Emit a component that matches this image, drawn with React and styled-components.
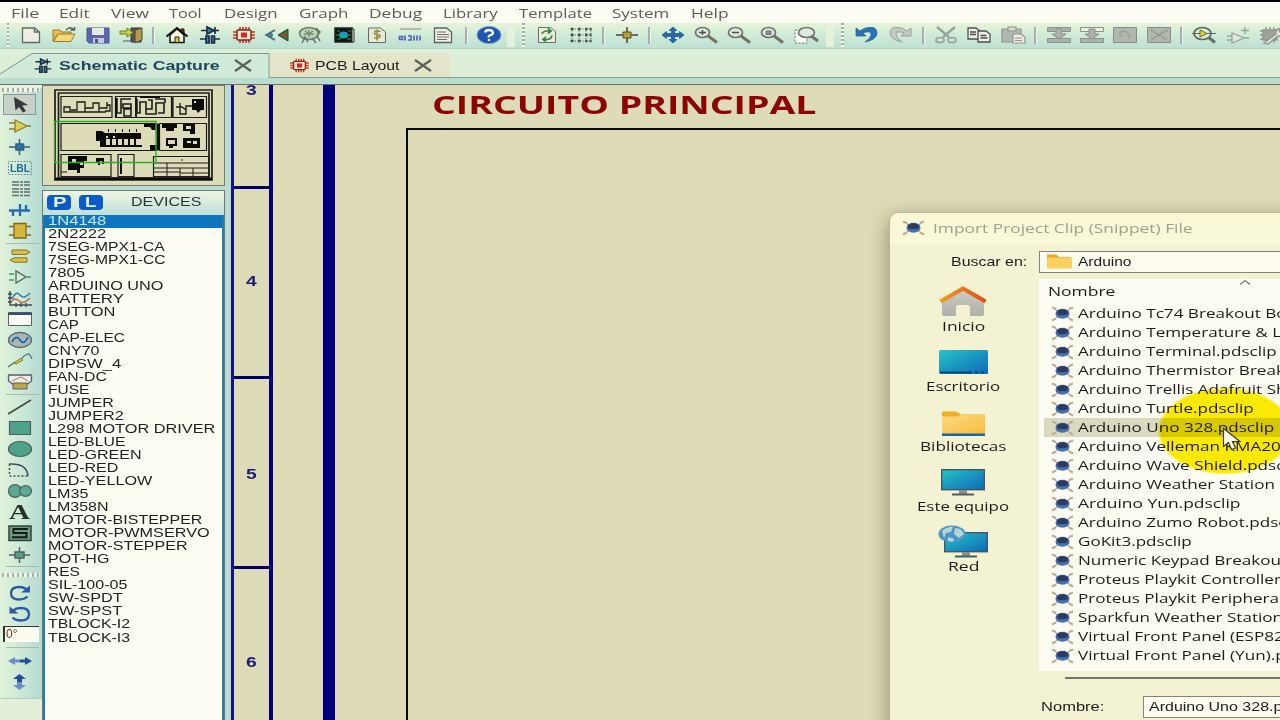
import React, { useLayoutEffect, useRef, useState } from "react";
import styled, { createGlobalStyle } from "styled-components";

const sans = '"Liberation Sans", Arial, sans-serif';
const ui = '"Open Sans", "Noto Sans", sans-serif';

const Global = createGlobalStyle`
  * { box-sizing: border-box; }
  html, body { margin: 0; padding: 0; overflow: hidden; }
`;

/* ---------- stretched text ---------- */
const WideBox = styled.span`
  display: inline-block;
  flex: none;
  white-space: pre;
  text-align: left;
`;
const WideInner = styled.span`
  display: inline-block;
  transform-origin: 0 50%;
`;
function Wide({ w, k = 1.3, children }) {
  const ref = useRef(null);
  const [scale, setScale] = useState(k);
  useLayoutEffect(() => {
    if (w) setScale(w / ref.current.offsetWidth);
  }, [w]);
  return (
    <WideBox style={w ? { width: w } : undefined}>
      <WideInner ref={ref} style={{ transform: `scaleX(${scale})` }}>
        {children}
      </WideInner>
    </WideBox>
  );
}

/* ---------- frame ---------- */
const Screen = styled.div`
  width: 1280px;
  height: 720px;
  overflow: hidden;
  display: flex;
  flex-direction: column;
  background: #cfe9d6;
  font-family: ${ui};
  color: #1c1c1c;
  position: relative;
`;
const MenuBar = styled.nav`
  height: 23px;
  flex: none;
  border-top: 2px solid #000;
  background: #fdfcf3;
  display: flex;
  align-items: center;
  padding: 0 0 0 11px;
  font-size: 12.8px;
  line-height: 20px;
  color: #5c5c58;
`;
const MenuItem = styled.span`
  flex: none;
  width: ${(p) => p.$slot}px;
`;
const Toolbar = styled.div`
  height: 26px;
  flex: none;
  display: flex;
  align-items: center;
  padding-bottom: 1px;
  background: linear-gradient(#e6f4da, #d3edd6 40%, #bde0d4);
  border-bottom: 1px solid #b7d3c6;
  overflow: hidden;
`;
const Tool = styled.span`
  width: 33.33px;
  height: 24px;
  flex: none;
  display: flex;
  align-items: center;
  justify-content: center;
`;
const ToolSep = styled.span`
  width: 12.6px;
  height: 17px;
  flex: none;
  display: flex;
  justify-content: center;
  &::before {
    content: "";
    width: 2px;
    background: #a9adb2;
    border-right: 1px solid #f4f4ee;
  }
`;
const ToolGrip = styled.span`
  width: ${(p) => p.$w}px;
  height: 100%;
  flex: none;
  display: flex;
  justify-content: flex-end;
  align-items: center;
  padding-right: ${(p) => p.$pad || 6}px;
  &::before {
    content: "";
    width: ${(p) => (p.$first ? 0 : 8)}px;
    height: 100%;
    margin-right: 7px;
    background: #e4f2dc;
  }
  &::after {
    content: "";
    width: 3px;
    height: 24px;
    background: repeating-linear-gradient(#9fb0a8 0 2px, #f2f8ea 2px 4px);
  }
`;
const TabStrip = styled.div`
  height: 29px;
  flex: none;
  display: flex;
  padding-top: 4px;
  background: #deefd9;
  border-bottom: 1px solid #8a9a90;
`;
const Tab = styled.div`
  height: ${(p) => (p.$active ? 25 : 24)}px;
  width: ${(p) => p.$w}px;
  flex: none;
  display: flex;
  align-items: center;
  gap: ${(p) => p.$gap}px;
  padding-left: ${(p) => p.$pad}px;
  padding-bottom: ${(p) => (p.$active ? 1 : 0)}px;
  font: ${(p) => (p.$active ? "bold 13px" : "13px")} ${sans};
  color: ${(p) => (p.$active ? "#1f4560" : "#1c1e20")};
  background: ${(p) => (p.$active ? "none" : "#e4e4c8")};
  position: relative;
  isolation: isolate;
`;
const TabEdge = styled.svg`
  position: absolute;
  left: 0;
  top: 0;
  z-index: -1;
`;
const SubStrip = styled.div`
  height: 7px;
  flex: none;
  background: #bbddce;
  border-bottom: 1px solid #6d6d70;
`;
const Body = styled.div`
  flex: 1;
  min-height: 0;
  display: flex;
`;

/* ---------- left tool column ---------- */
const Rail = styled.div`
  width: 42px;
  flex: none;
  padding-top: 1px;
  background: #e2f0d9;
`;
const RailBody = styled.div`
  height: 611px;
  background: linear-gradient(90deg, #e1f2da, #cce9d6 50%, #b4dad2);
  border-bottom: 1px solid #b5cfc4;
`;
const RailGrip = styled.div`
  height: 4px;
  margin: ${(p) => p.$m || "2px"};
  background: repeating-linear-gradient(90deg, #a4b3aa 0 2px, #f1f7e8 2px 5px);
`;
const RailTool = styled.div`
  width: ${(p) => (p.$on ? 33 : 39)}px;
  height: 21.15px;
  margin-left: ${(p) => (p.$on ? 3 : 0)}px;
  display: flex;
  align-items: center;
  justify-content: center;
  border: ${(p) => (p.$on ? "1px solid #8299a0" : "none")};
  background: ${(p) => (p.$on ? "#c6d2c6" : "none")};
`;
const RailLine = styled.div`
  height: 1px;
  margin: ${(p) => p.$m || "1px 3px 1px 6px"};
  background: #a9b9ac;
`;
const Angle = styled.div`
  width: 36px;
  height: 16px;
  margin: 2px 0 0 3px;
  border: 1px solid #333;
  border-width: 1px 0 0 2px;
  background: #fbfbf0;
  font: 12px/14px ${sans};
  color: #5b3a1c;
  padding-left: 1px;
`;

/* ---------- device column ---------- */
const Side = styled.div`
  width: 189px;
  flex: none;
  display: flex;
  flex-direction: column;
  gap: 4px;
  background: linear-gradient(90deg, #a8cfd0, #bbddd0 6px, #bbddd0);
`;
const Preview = styled.div`
  width: 183px;
  height: 101px;
  flex: none;
  border: 1px solid #777c70;
  background: #dedbb9;
`;
const Devices = styled.div`
  width: 183px;
  flex: 1;
  border: 1px solid #70787c;
  border-bottom: 0;
  background: #fdfcf3;
  display: flex;
  flex-direction: column;
`;
const DevicesHead = styled.div`
  height: 24px;
  flex: none;
  display: flex;
  align-items: center;
  padding: 0 0 2px 4px;
  background: linear-gradient(#eef6e2, #c0e0d8);
  font: 13.5px/20px ${sans};
  color: #2b3239;
`;
const Pill = styled.span`
  width: 24px;
  height: 15px;
  margin-right: 8px;
  border-radius: 4px;
  background: #0a5bc8;
  color: #e6f2ea;
  font: bold 14px/15px ${sans};
  display: flex;
  justify-content: center;
`;
const DeviceList = styled.div`
  flex: 1;
  border: solid #1f7fb0;
  border-width: 0 2px 0 2px;
  font: 12.6px/13px ${sans};
  color: #202226;
`;
const Device = styled.div`
  height: 13.02px;
  margin-left: -1px;
  padding-left: 4px;
  background: ${(p) => (p.$on ? "#0d74be" : "none")};
  color: ${(p) => (p.$on ? "#cfe6dc" : "inherit")};
`;

/* ---------- schematic sheet ---------- */
const Sheet = styled.div`
  flex: 1;
  min-width: 0;
  display: flex;
  background: #dedbb9;
`;
const Ruler = styled.div`
  width: 42px;
  flex: none;
  border-left: 3px solid #14147c;
  border-right: 4px solid #00007c;
  display: flex;
  flex-direction: column;
`;
const RulerCell = styled.div`
  height: ${(p) => p.$h}px;
  flex: none;
  border-bottom: 3px solid #00006c;
  display: flex;
  align-items: center;
  justify-content: center;
  padding-top: ${(p) => p.$pt || 0}px;
  padding-bottom: ${(p) => p.$pb || 0}px;
  font: bold 14px/16px ${sans};
  color: #1c1c78;
`;
const Border = styled.div`
  width: 12px;
  margin-left: 50px;
  flex: none;
  background: #00007c;
`;
const Canvas = styled.div`
  flex: 1;
  display: flex;
  flex-direction: column;
`;
const SheetTitle = styled.h1`
  margin: 0;
  height: 43px;
  padding: 3px 0 0 97px;
  font: bold 24.5px/34px ${ui};
  color: #8c0600;
`;
const Frame = styled.div`
  flex: 1;
  margin-left: 71px;
  border: solid #060a04;
  border-width: 2.5px 0 0 2.5px;
`;

/* ---------- dialog ---------- */
const Dialog = styled.section`
  position: absolute;
  left: 889px;
  top: 212px;
  width: 520px;
  height: 540px;
  border: 1px solid #b9b99c;
  border-radius: 9px 0 0 0;
  background: #f3f2d3;
  box-shadow: 0 6px 20px rgba(60, 58, 30, 0.5);
  display: flex;
  flex-direction: column;
`;
const DialogTitle = styled.header`
  height: 31px;
  flex: none;
  display: flex;
  align-items: center;
  gap: 8px;
  padding: 0 0 2px 12px;
  background: #f8f7d8;
  border-radius: 9px 0 0 0;
  font-size: 13px;
  color: #a0a08c;
`;
const Row = styled.div`
  display: flex;
  align-items: center;
  flex: none;
`;
const LookRow = styled(Row)`
  height: 35px;
  font: 12.6px/20px ${sans};
  color: #1b1b1b;
  padding-left: 61px;
`;
const Field = styled.div`
  flex: 1;
  height: 22px;
  margin-left: ${(p) => p.$ml}px;
  padding-left: ${(p) => p.$pl}px;
  border: 1px solid #84847c;
  background: #fdfcef;
  display: flex;
  align-items: center;
  gap: 6px;
`;
const Split = styled.div`
  display: flex;
  height: 392px;
  flex: none;
`;
const Places = styled.div`
  width: 149px;
  flex: none;
`;
const Place = styled.div`
  height: 60.1px;
  display: flex;
  flex-direction: column;
  align-items: center;
  justify-content: flex-end;
  font-size: 13px;
  line-height: 18px;
  padding: 0 3px 4px 0;
  & svg { margin-bottom: ${(p) => p.$gap}px; }
`;
const Files = styled.div`
  flex: 1;
  background: #fdfcf3;
  font-size: 13px;
  line-height: 19px;
`;
const FilesHead = styled.div`
  height: 25px;
  padding: 0 0 1px 9px;
  display: flex;
  align-items: center;
  position: relative;
`;
const Caret = styled.svg`
  position: absolute;
  left: 200px;
  top: 0;
`;
const File = styled.div`
  height: 19.03px;
  margin-left: 5px;
  padding-left: 7px;
  display: flex;
  align-items: center;
  gap: 4px;
  background: ${(p) => (p.$on ? "#dad9bf" : "none")};
`;
const Divider = styled.div`
  height: 2px;
  margin: 6px 0 0 175px;
  background: #757570;
  flex: none;
`;
const NameRow = styled(LookRow)`
  height: 24px;
  margin-top: 16px;
  padding-left: 151px;
`;
const Halo = styled.div`
  position: absolute;
  left: 1157px;
  top: 387px;
  width: 136px;
  height: 88px;
  border-radius: 50%;
  background: radial-gradient(closest-side, #fcec00 94%, rgba(252, 236, 0, 0));
  mix-blend-mode: multiply;
`;
const Pointer = styled.svg`
  position: absolute;
  left: 1222px;
  top: 427px;
`;

/* ---------- icons ---------- */
const paper = "#efeee0";
const gy = "#98a09c";
const S = { fill: "none", strokeWidth: 1.5 };
const shapes = {
  file: <path d="M3.5 2h12l5 4v10.500h-17zM15.500 2v4h5" fill={paper} stroke="#63686b" strokeWidth="1.300" />,
  open: (
    <g>
      <path d="M1 4h7l2 2h9v3H5L1 15z" fill="#e8bd54" stroke="#9d7a2a" />
      <path d="M1.500 15.500L6 8h17l-4 7.500z" fill="#f5d77c" stroke="#9d7a2a" />
      <path d="M14 4q4-4 7-1m1.500-2v3h-4" {...S} stroke="#46566a" />
    </g>
  ),
  save: (
    <g>
      <path d="M1 2h22v15H3l-2-2z" fill="#5a67ad" stroke="#47539a" />
      <path d="M6 2h12v7H6z" fill="#e8eae6" />
      <path d="M7 12h11v5H7z" fill="#c6cbdc" />
      <path d="M9 13h3v4H9z" fill="#47539a" />
    </g>
  ),
  exit: (
    <g>
      <path d="M12 2h10v14H12z" fill="#55584a" stroke="#333" />
      <path d="M16 4l7-2v12l-7 3z" fill="#b59a4a" stroke="#444" />
      <path d="M1 5h7V2l6 4.500L8 11V8H1z" fill="#c6d24a" stroke="#6e7a2b" />
      <path d="M4 15h9" stroke="#555" />
    </g>
  ),
  home: (
    <g>
      <path d="M16 3h3v5h-3z" fill="#b22" stroke="#111" />
      <path d="M5 9v7.500h14V9l-7-6z" fill="#faf8e4" stroke="#111" strokeWidth="1.500" />
      <path d="M1.500 10.500L12 2l10.500 8.500" {...S} stroke="#111" strokeWidth="2" />
      <path d="M10 11h4v5.500h-4z" fill="#e5c23c" stroke="#222" />
    </g>
  ),
  schem: (
    <g stroke="#1f2c3a" strokeWidth="1.700">
      <path d="M3 4.500h18M17 1v7" fill="none" />
      <path d="M9 1v7l7-3.500z" fill="#2a84c4" />
      <path d="M2 13h6m8 0h6" />
      <path d="M8 10h3v7H8zM13.500 10h3v7h-3z" fill="#2a84c4" />
    </g>
  ),
  chip: (
    <g>
      <path d="M8 1v3m3-3v3m3-3v3m3-3v3M8 14v3m3-3v3m3-3v3m3-3v3M1 6h4M1 9h4M1 12h4M19 6h4M19 9h4M19 12h4" stroke="#d2301c" strokeWidth="1.600" />
      <rect x="5" y="4" width="14" height="10" rx="1" fill="#f3e8d8" stroke="#7c2a1c" strokeWidth="1.500" />
      <rect x="9" y="6.500" width="6" height="5" fill="#d22" />
    </g>
  ),
  view3d: (
    <g>
      <path d="M10 4L1 9l9 5" fill="none" stroke="#45607a" strokeWidth="1.500" />
      <path d="M6 6q4 3 0 6l-3-3z" fill="#4777ab" />
      <path d="M23 3L13 9l10 6z" fill="#2a7d43" stroke="#1d4e2d" />
      <path d="M21 6l-5 3 5 3z" fill="#c8321f" />
    </g>
  ),
  gerber: (
    <g>
      <ellipse cx="11" cy="7.500" rx="9.500" ry="6" fill="#bcd3b8" stroke="#6c806a" strokeWidth="1.500" />
      <path d="M6 8h10M11 4v7M7 5l3 2M15 5l-3 2" stroke="#55705a" />
      <path d="M4 17l3-6 3 5M18 2l4 4-3 4 3 5M14 12l4 5" {...S} stroke="#6c746a" />
    </g>
  ),
  code: (
    <g>
      <path d="M3 2h17v14H3z" fill="#111" stroke="#222" strokeWidth="1.500" />
      <path d="M20 3h2v13h-2z" fill="#e4e6d8" stroke="#333" />
      <ellipse cx="11.500" cy="9" rx="4.500" ry="3.500" fill="#18a0b4" />
      <path d="M5 5h3m8 0h3M5 13h4m6 0h4M4 9h3m9 0h3" stroke="#27a24a" />
    </g>
  ),
  bom: (
    <g>
      <path d="M3.500 2h12l5 4v10.500h-17z" fill="#e9ead6" stroke="#666b62" />
      <path d="M15.500 5.500q-6-2-6 1t5 2.500q2.500 3-5.500 3M12 3.500v11" fill="none" stroke="#8c8c40" strokeWidth="1.500" />
    </g>
  ),
  bits: (
    <g>
      <path d="M2 3h21" stroke="#a9a9a9" strokeWidth="1.500" />
      <path d="M1.500 10.500v3h3v-3zM7 9.500v5M10 10h3v4h-3M16 9.500v5M19 9.500v5M22 9.500v5" {...S} stroke="#5564b8" strokeWidth="1.700" />
    </g>
  ),
  note: (
    <g>
      <path d="M3.500 2h12l5 4v10.500h-17z" fill={paper} stroke="#5c6165" strokeWidth="1.300" />
      <path d="M6 6h9M6 8.500h12M6 11h12M6 13.500h10" stroke="#6c7070" />
    </g>
  ),
  help: (
    <g>
      <ellipse cx="12" cy="9" rx="12" ry="8.600" fill="#1f56b4" stroke="#7c9cca" />
      <path d="M8 6.500Q8.500 4 12 4t4 2.700q0 1.600-2.500 2.500T12 11.500M12 13v2" fill="none" stroke="#f4f6ee" strokeWidth="2.300" />
    </g>
  ),
  refresh: (
    <g>
      <path d="M3.500 1.500h12l5 4v11h-17z" fill="#ebecdc" stroke="#6b706a" />
      <path d="M7 8q1-3 5-3h3m-2-2.500L16 5l-3 2.500M17 9.500q-1 4-5 4H9m2-2.500l-3 2.500 3 2" fill="none" stroke="#2e8a3a" strokeWidth="1.700" />
    </g>
  ),
  grid: (
    <g fill="none" stroke="#4a5248">
      <path d="M1 3h22M1 9h22M1 15h22M3 2v14M10 2v14M17 2v14M22 2v14" strokeWidth="1.100" strokeDasharray="1 1.500" />
      <path d="M2 3h2.500m4.500 0h2.500m4.500 0h2.500m2 0h2M2 9h2.500m4.500 0h2.500m4.500 0h2.500m2 0h2M2 15h2.500m4.500 0h2.500m4.500 0h2.500m2 0h2" strokeWidth="2.300" />
    </g>
  ),
  origin: (
    <g>
      <path d="M1 9h22M12 1v16" stroke="#444" strokeWidth="1.500" />
      <path d="M8 6h8v6H8z" fill="#b9a03a" stroke="#5a4c18" />
    </g>
  ),
  pan: <path d="M12 1l4 3.500h-2.500v3h5V5.500L23 9l-4.500 3.500v-2h-5v3H16L12 17l-4-3.500h2.500v-3h-5v2L1 9l4.500-3.500v2h5v-3H8z" fill="#2468b0" stroke="#1d4e86" strokeWidth=".7" />,
  zin: (
    <g stroke="#6d7470">
      <path d="M14 10l9 6.500" stroke="#77705e" strokeWidth="3" />
      <ellipse cx="8.500" cy="6.500" rx="7" ry="5" fill="#dfe9dc" strokeWidth="1.700" />
      <path d="M5 6.500h7M8.500 4v5" stroke="#4c524c" strokeWidth="1.500" />
    </g>
  ),
  zout: (
    <g stroke="#6d7470">
      <path d="M14 10l9 6.500" stroke="#77705e" strokeWidth="3" />
      <ellipse cx="8.500" cy="6.500" rx="7" ry="5" fill="#dfe9dc" strokeWidth="1.700" />
      <path d="M5 6.500h7" stroke="#4c524c" strokeWidth="1.500" />
    </g>
  ),
  zall: (
    <g stroke="#6d7470">
      <path d="M14 10l9 6.500" stroke="#77705e" strokeWidth="3" />
      <ellipse cx="8.500" cy="6.500" rx="7" ry="5" fill="#dfe9dc" strokeWidth="1.700" />
      <path d="M6 5h5v3.500H6z" fill="#8a918c" />
    </g>
  ),
  zarea: (
    <g stroke="#6d7470">
      <path d="M1 4h12v13H1z" fill="#fbfbf4" strokeDasharray="2 1.500" />
      <path d="M17 10l7 5" stroke="#77705e" strokeWidth="3" />
      <ellipse cx="12.500" cy="6.500" rx="8" ry="5" fill="#dfe9dc" strokeWidth="1.700" />
    </g>
  ),
  undo: <path d="M1 2v8h10L8 7q8-3 8 1.500 0 3.500-6 7.500 12-2.500 12-9T14 1.500Q9 1.500 5 5z" fill="#2a72b4" stroke="#1f5c96" strokeWidth=".7" />,
  redo: <path d="M23 2v8H13l3-3q-8-3-8 1.500 0 3.500 6 7.500Q2 13.500 2 7t8-5.500q5 0 9 3.500z" fill="#c3cac2" stroke={gy} />,
  cut: (
    <g stroke={gy} strokeWidth="1.700" fill="none">
      <path d="M3 1l12 10M21 1L9 11" strokeWidth="2.300" />
      <ellipse cx="6" cy="14" rx="4" ry="2.500" />
      <ellipse cx="18" cy="14" rx="4" ry="2.500" />
    </g>
  ),
  copy: (
    <g fill={paper} stroke="#4b5055" strokeWidth="1.300">
      <path d="M1 2h8l4 3v8H1z" />
      <path d="M11 5h8l4 3v8H11z" />
      <path d="M3 6h6M3 8.500h6M13.500 9.500h6M13.500 12h7" />
    </g>
  ),
  paste: (
    <g stroke="#8f9490" strokeWidth="1.200">
      <path d="M1 3h19v13H1z" fill="#b2b8b0" />
      <path d="M7 1h8v4H7z" fill="#d9dccf" />
      <path d="M12 8h8l4 3v6H12z" fill={paper} />
      <path d="M14 12h7M14 14.500h7" />
    </g>
  ),
  blkCopy: (
    <g fill="#adb2ac" stroke="#8b918c">
      <path d="M.5 1.500h23v4H.5zM.5 12.500h23v4H.5z" />
      <path d="M9 3h6v5h4l-7 5-7-5h4z" />
    </g>
  ),
  blkMove: (
    <g fill="#adb2ac" stroke="#8b918c">
      <path d="M.5 1.500h23v4H.5z" fill={paper} />
      <path d="M.5 12.500h23v4H.5z" />
      <path d="M9 3h6v5h4l-7 5-7-5h4z" />
    </g>
  ),
  blkRot: (
    <g stroke="#878d88">
      <path d="M.5 1.500h23v15H.5z" fill="#b2b7ae" />
      <path d="M6 8q4-5 10 0v4M9 5L6 8l4 2" fill="none" strokeDasharray="2 1" />
    </g>
  ),
  blkDel: (
    <g stroke="#878d88">
      <path d="M.5 1.500h23v15H.5z" fill="#b2b7ae" />
      <path d="M4 4l16 10M20 4L4 14" strokeDasharray="2 1" strokeWidth="1.500" />
    </g>
  ),
  pick: (
    <g>
      <path d="M16 11l7 5.500" stroke="#66706e" strokeWidth="3" />
      <ellipse cx="10.500" cy="7.500" rx="8.500" ry="6" fill="#dbe9d6" stroke="#5c6866" strokeWidth="1.700" />
      <path d="M0 7.500h24" stroke="#5c6866" />
      <path d="M8 4v7l7-3.500z" fill="#d9d43c" stroke="#6b7038" />
    </g>
  ),
  make: (
    <g stroke="#9aa29d" fill="none" strokeWidth="1.300">
      <path d="M6 7v10l12-5zM1 10h5M1 14h5M18 12h5M15 4.500h8M19 1v7" fill="#dfe8da" />
    </g>
  ),
  pack: (
    <g stroke="#8e9490" strokeWidth="1.300">
      <path d="M1 5h3m-3 4h3m-3 4h3M7 1v3m4-3v3m4-3v3M7 14v3m4-3v3m4-3v3" />
      <path d="M4 4h14v10H4z" fill="#9ca29c" />
      <path d="M5 17L17 8q-1-5 5-6l-2 3 2 2 3-1q-2 5-6 4L9 18z" fill="#e4e6d8" />
    </g>
  ),

  arrow: <path d="M6 1l14 8-6 .5L18 15l-3 1.500L11 11l-3.500 3.500z" fill="#33383a" />,
  comp: (
    <g stroke="#8d7c38" strokeWidth="1.300">
      <path d="M1 6h6M1 12h6M18 9h5" />
      <path d="M7 3v12l12-6z" fill="#e3cf4e" />
    </g>
  ),
  junction: (
    <g stroke="#35607a" strokeWidth="1.600">
      <path d="M1 9h21M11.500 1v16" />
      <path d="M8 6h7.500v6H8z" fill="#2078b8" />
    </g>
  ),
  lbl: <rect x="0.500" y="2.500" width="23" height="13" fill="none" stroke="#6d8084" strokeDasharray="1.500 1.500" />,
  script: <path d="M4 2h18M4 5h18M4 9h18M4 12h18M4 15.500h18" stroke="#666e72" strokeWidth="1.400" strokeDasharray="7 1 3 1" />,
  bus: <path d="M1 9.500h21M5 9v6M12 3v12M18 4v5" stroke="#1f6fae" strokeWidth="2.300" />,
  sub: (
    <g stroke="#7b6b23" strokeWidth="1.300">
      <path d="M1 4.500h22M1 13h22" />
      <path d="M6 1.500h12v14.500H6z" fill="#d8b53c" />
    </g>
  ),
  term: (
    <g fill="#dcc146" stroke="#80722c">
      <path d="M4 3h14l4 2.200-4 2.200H4z" />
      <path d="M19 10.800H6L2 13l4 2.200h13z" />
    </g>
  ),
  pin: (
    <g stroke="#56635f" strokeWidth="1.300" fill="none">
      <path d="M8 3v12l10-6z" />
      <path d="M1 6h5M1 12h5M19 9h4" stroke="#3b9a6c" />
    </g>
  ),
  graph: (
    <g fill="none" strokeWidth="1.400">
      <path d="M2 2v14h22M0 5h4M0 9h4M0 13h4M8 14v4M13 14v4M18 14v4" stroke="#444a52" />
      <path d="M4 10q4-9 8-4t10-2" stroke="#2680b8" />
      <path d="M4 12q3-4 7 0t11-3" stroke="#c66a50" />
    </g>
  ),
  tape: (
    <g>
      <path d="M0.500 2.500h23v13H.5z" fill="#fafaf4" stroke="#59636a" />
      <path d="M.5 2.500h23v2.500H.5z" fill="#3c4c78" />
    </g>
  ),
  gen: (
    <g>
      <ellipse cx="12" cy="9" rx="11.500" ry="7.500" fill="#a9b6b6" stroke="#5c6a70" strokeWidth="1.300" />
      <path d="M4 11q4-8 8-2t8-3" fill="none" stroke="#1d62a8" strokeWidth="1.700" />
    </g>
  ),
  probe: (
    <g fill="none">
      <path d="M0 15l7-5" stroke="#60686a" strokeWidth="1.300" />
      <path d="M6 11l7-5 2 2-7 4z" fill="#dccb40" stroke="#7e7224" />
      <path d="M14 6q6-6 8-3l2 4" stroke="#5a7684" strokeWidth="1.300" />
    </g>
  ),
  meter: (
    <g stroke="#576068">
      <path d="M0.500 2h23v6l-4 3h-15l-4-3z" fill="#e8eee8" strokeWidth="1.300" />
      <path d="M4 8l9-4 7 4" fill="none" stroke="#be7150" />
      <path d="M5 10h14v6H5z" fill="#b9a94c" />
    </g>
  ),
  line: <path d="M0 16L23 2" stroke="#45494c" strokeWidth="1.600" />,
  box: <path d="M1.500 2.500h21v13h-21z" fill="#4fa28a" stroke="#49605f" strokeWidth="1.200" />,
  circle: <ellipse cx="12" cy="9" rx="11.500" ry="7.500" fill="#4fa28a" stroke="#49605f" strokeWidth="1.200" />,
  arc: (
    <g fill="none" stroke="#3f4f58" strokeWidth="1.500">
      <path d="M1.500 3v12h18" strokeDasharray="2 2" />
      <path d="M1 3q18-1 19 12" />
    </g>
  ),
  path2: (
    <g fill="#5aaa92" stroke="#49605f" strokeWidth="1.200">
      <ellipse cx="7" cy="9" rx="6.500" ry="6.300" />
      <ellipse cx="17.500" cy="9" rx="6" ry="5.300" />
    </g>
  ),
  sym: (
    <g>
      <path d="M1 2h22v14.500H1z" fill="#6b9a7f" stroke="#31413a" strokeWidth="1.500" />
      <path d="M20 5H5.500v4h13v4.300H4" fill="none" stroke="#151a18" strokeWidth="2" />
    </g>
  ),
  marker: (
    <g stroke="#506260" strokeWidth="1.500">
      <path d="M1 9h21M11.500 1v16" />
      <path d="M7 6h9v6H7z" fill="#4fa08a" />
    </g>
  ),
  rotr: (
    <g>
      <path d="M18.500 5.500Q16 3 11.500 3 3 3 3 9.300T11.500 15.500q4.500 0 8-3" fill="none" stroke="#2c5aa4" strokeWidth="2.300" />
      <path d="M22 1.500v7H13z" fill="#2c5aa4" />
    </g>
  ),
  rotl: (
    <g>
      <path d="M5 5.500Q8 3 12.500 3 21 3 21 9.300t-8.500 6.200q-5 0-8-3" fill="none" stroke="#2c5aa4" strokeWidth="2.300" />
      <path d="M1.500 1.500v7h9z" fill="#2c5aa4" />
    </g>
  ),
  flipx: (
    <g>
      <path d="M0 9l7-4v2.500h5v3H7V13z" fill="#6c8ccc" />
      <path d="M24 9l-7-4v2.500h-5v3h5V13z" fill="#214f96" />
    </g>
  ),
  flipy: (
    <g>
      <path d="M11.500 1l-6.500 5h4v3.500h5V6h4z" fill="#214f96" />
      <path d="M11.500 17L5 12h4V9h5v3h4z" fill="#6c8ccc" />
    </g>
  ),
};
const Icon = ({ n, w = 24, h = 18 }) => (
  <svg width={w} height={h} viewBox="0 0 24 18" overflow="visible">
    {shapes[n]}
    {n === "lbl" && (
      <text x="2" y="13" fontFamily="Liberation Sans, sans-serif" fontSize="11" fontWeight="bold" textLength="20" lengthAdjust="spacingAndGlyphs" fill="#1b6ca2">LBL</text>
    )}
    {n === "serif" && (
      <text x="1" y="16" fontFamily="Liberation Serif, serif" fontSize="20" fontWeight="bold" textLength="21" lengthAdjust="spacingAndGlyphs" fill="#26302e">A</text>
    )}
  </svg>
);

const ClipIcon = () => (
  <svg width="23" height="16" viewBox="0 0 23 16">
    <path d="M1 1.500l4 1.500M22 1.500l-4 1.500M1 14.500l4-2M22 14.500l-4-2" stroke="#c2ab88" strokeWidth="2" />
    <path d="M4 3l4 3M19 3l-4 3M5 12l4-3M18 12l-4-3" stroke="#a3adb8" strokeWidth="1.500" />
    <ellipse cx="11.500" cy="7.700" rx="7" ry="5" fill="#4a6ba0" />
    <ellipse cx="11.500" cy="6.500" rx="5.500" ry="3.200" fill="#2b3c60" />
    <ellipse cx="12" cy="10.500" rx="3.500" ry="1.300" fill="#3b78bd" />
  </svg>
);
const CloseX = () => (
  <svg width="18" height="13" viewBox="0 0 18 13">
    <path d="M1 1l16 11M17 1L1 12" stroke="#5d605c" strokeWidth="2.200" />
  </svg>
);
const SmallFolder = () => (
  <svg width="25" height="15" viewBox="0 0 25 15">
    <path d="M0 1.500Q0 .5 1 .5h8l3 2.500h12v6H0z" fill="#f0a61c" />
    <rect y="3.500" width="25" height="11" rx="1.500" fill="#fbcf63" />
  </svg>
);

const Gradients = () => (
  <svg width="0" height="0" style={{ display: "block" }}>
    <defs>
      <linearGradient id="scr" x1="0" y1="0" x2="1" y2="1">
        <stop offset="0" stopColor="#27c4c6" />
        <stop offset="1" stopColor="#0c69b8" />
      </linearGradient>
      <linearGradient id="fold" x1="0" y1="0" x2="1" y2="1">
        <stop offset="0" stopColor="#fddc86" />
        <stop offset="1" stopColor="#f6bc38" />
      </linearGradient>
      <linearGradient id="roof" x1="0" y1="0" x2="1" y2="0">
        <stop offset="0" stopColor="#f49a1e" />
        <stop offset="1" stopColor="#e04c16" />
      </linearGradient>
      <linearGradient id="wall" x1="0" y1="0" x2="0" y2="1">
        <stop offset="0" stopColor="#cfcfc6" />
        <stop offset="1" stopColor="#b0b0aa" />
      </linearGradient>
    </defs>
  </svg>
);
const placeIcons = {
  home: (
    <svg width="48" height="32" viewBox="0 0 48 32">
      <path d="M3 14L24 2l21 12v15q0 2-3 2H31V22q0-2-3-2h-8q-3 0-3 2v9H6q-3 0-3-2z" fill="url(#wall)" />
      <path d="M1.500 16.500L24 3.500l22.500 13" fill="none" stroke="url(#roof)" strokeWidth="4" strokeLinejoin="round" />
    </svg>
  ),
  desk: (
    <svg width="49" height="24" viewBox="0 0 49 24">
      <rect width="49" height="24" rx="1.500" fill="url(#scr)" />
      <path d="M1 22.500h32m3 0h3m3 0h3" stroke="#0b4474" strokeWidth="2" />
    </svg>
  ),
  lib: (
    <svg width="43" height="26" viewBox="0 0 43 26">
      <path d="M0 1.500Q0 .5 1 .5h13l5 3h24v8H0z" fill="#f3ad22" />
      <path d="M0 5.500h15l4-2h24V23H0z" fill="url(#fold)" />
      <path d="M0 22.500h43v2.500H0z" fill="#1667a8" />
    </svg>
  ),
  pc: (
    <svg width="44" height="27" viewBox="0 0 44 27">
      <rect x=".7" y=".7" width="42.600" height="20" fill="url(#scr)" stroke="#3f5866" strokeWidth="1.400" />
      <path d="M18 21h8v4h-8z" fill="#8a9090" />
      <path d="M11 25.500h22" stroke="#4f5a5e" strokeWidth="2" />
    </svg>
  ),
  net: (
    <svg width="50" height="34" viewBox="0 0 50 34">
      <rect x="6.700" y="8.700" width="42.600" height="19" fill="url(#scr)" stroke="#3f5866" strokeWidth="1.400" />
      <path d="M24 28h8v4h-8z" fill="#8a9090" />
      <path d="M17 32.500h22" stroke="#4f5a5e" strokeWidth="2" />
      <ellipse cx="14" cy="10" rx="13.500" ry="8.500" fill="#4c96c4" />
      <path d="M4 7q6-5 11-4l-2 5-5 1-2 5zM17 4q7 0 9 6l-5 4-5-4zM10 13l6 2-1 3-5-1z" fill="#b4d6d4" />
    </svg>
  ),
};

/* miniature of the whole sheet */
const Overview = () => (
  <svg width="181" height="99" viewBox="43 86 181 99">
    <g fill="none" stroke="#1b1d18">
      <path d="M55 90h157v90H55zM58.500 93h150.500v85H58.500z" strokeWidth="1.700" />
      <path d="M61 96.500h51v21H61zM115.500 96.500h56v21h-56zM173 96.500h33.500v21H173zM61 123.500h96v27H61zM159.500 123.500h47v27h-47zM61 154.500h50v22H61zM118 154.500h16v22h-16zM153.500 156.500h55.500v20h-55.500z" strokeWidth="1.200" />
      <path d="M64 107h6v5h-6zM71 110h6v-8h8v10h-8m8-4h8v-5h6v9h-6m6-4h8v-6m0 3h3v6h-5M70 112h36" strokeWidth="1.300" />
      <path d="M117 98v15h4V99h10m-8 5h8v4h-8zM124 109h7v7h-7zM137 99v14h3v-11h6v11m2-13h4v9h-6v5h10v-11h8v10h-6M155 99h10v4" strokeWidth="1.600" />
      <path d="M172 97v20M136 97v20" strokeWidth="2" />
      <path d="M176 107h6l4 3m-6-7v11h6v-8h8" strokeWidth="1.400" />
      <path d="M153.500 163h55.500M153.500 168h55.500M167 163v13M180 168v9M193 168v9M153.500 172h27m0 1h28M61 172h6M182 159v2" />
    </g>
    <g fill="#0b0c08">
      <path d="M192 99h12v11h-3l-3 3-2-3h-4z" />
      <path d="M96 131h6l3 2h36v6h-5v7h-2v-7h-4v7h-2v-7h-4v7h-2v-7h-4v7h-2v-7h-4v7h-2v-7h-4v6h-6v-4h-4z" />
      <path d="M100 145h42v2h-42zM108 129h1v3h-1zM115 129h1v3h-1zM122 129h1v3h-1zM129 129h1v3h-1zM136 129h1v3h-1z" />
      <path d="M144 124h12v6h-4l-2-3h-6zM150 145h7v5h-7zM157 124h2.500v26H157z" />
      <path d="M162 124h15v4h-3v3h-8v-3h-4zM183 124h12v10h-5v-3h-7zM166 138h11v8h-4v2h-4v-2h-3zM183 138h17v10H183z" />
      <path d="M68 156h19v5h-3v7h-4v5h-3v-3h-9zM96 158h8v6h-2v-3h-2v4h-2v-3h-2zM115 98h2v19h-2zM140 96h20v2h-20zM120 158h2v16h-2z" />
      <path d="M55 177.500h157v2.500H55z" />
    </g>
    <g fill="#dedbb9">
      <path d="M168 140h7v4h-7zM186 126h5v3h-5zM187 141h4v2h-4zM193 141h4v3h-4zM72 159h4v3h-4zM80 163h3v2h-3zM194 101h2v2h-2zM106 136h2v2h-2zM113 136h2v2h-2z" />
    </g>
    <path d="M54.500 121.500h101.500v41H54.500z" fill="none" stroke="#2fae24" strokeWidth="1.300" />
  </svg>
);

/* ---------- data ---------- */
const menu = [
  ["File", 28, 47.5], ["Edit", 31, 52], ["View", 38, 58.5], ["Tool", 33, 54.5], ["Design", 54, 75.5], ["Graph", 49, 69.500],
  ["Debug", 53, 74.500], ["Library", 55, 76], ["Template", 73, 93], ["System", 57, 78.500], ["Help", 38, 60],
];
const tools = [
  "file", "open", "save", "exit", "|", "home", "schem", "chip", "view3d", "gerber", "code", "bom", "bits", "note", "|", "help",
  "g24.6", "refresh", "grid", "|", "origin", "|", "pan", "zin", "zout", "zall", "zarea", "g27.6", "undo", "redo", "|", "cut", "copy", "paste",
  "|", "blkCopy", "blkMove", "blkRot", "blkDel", "|", "pick", "make", "pack",
];
const rail = [
  ["arrow", "comp", "junction", "lbl", "script", "bus", "sub"],
  ["term", "pin", "graph", "tape", "gen", "probe", "meter"],
  ["line", "box", "circle", "arc", "path2", "serif", "sym", "marker"],
];
const devices = [
  ["1N4148", 58], ["2N2222", 58], ["7SEG-MPX1-CA", 117], ["7SEG-MPX1-CC", 117], ["7805", 37], ["ARDUINO UNO", 116], ["BATTERY", 76],
  ["BUTTON", 68], ["CAP", 31], ["CAP-ELEC", 77], ["CNY70", 52], ["DIPSW_4", 73], ["FAN-DC", 59], ["FUSE", 42], ["JUMPER", 66],
  ["JUMPER2", 76], ["L298 MOTOR DRIVER", 167], ["LED-BLUE", 78], ["LED-GREEN", 93], ["LED-RED", 70], ["LED-YELLOW", 104],
  ["LM35", 41], ["LM358N", 61], ["MOTOR-BISTEPPER", 155], ["MOTOR-PWMSERVO", 161], ["MOTOR-STEPPER", 140], ["POT-HG", 61],
  ["RES", 32], ["SIL-100-05", 79], ["SW-SPDT", 75], ["SW-SPST", 74], ["TBLOCK-I2", 82], ["TBLOCK-I3", 82],
];
const places = [
  ["home", "Inicio", 43, 0], ["desk", "Escritorio", 74, 3], ["lib", "Bibliotecas", 87, 0], ["pc", "Este equipo", 92, 1], ["net", "Red", 31, -1],
];
const files = [
  ["Arduino Tc74 Breakout Board.pdsclip"], ["Arduino Temperature & Light.pdsclip"], ["Arduino Terminal.pdsclip", 199],
  ["Arduino Thermistor Breakout.pdsclip"], ["Arduino Trellis Adafruit Shield.pdsclip"], ["Arduino Turtle.pdsclip", 176],
  ["Arduino Uno 328.pdsclip", 196], ["Arduino Velleman KMA204.pdsclip"], ["Arduino Wave Shield.pdsclip"],
  ["Arduino Weather Station Shield.pdsclip"], ["Arduino Yun.pdsclip", 162], ["Arduino Zumo Robot.pdsclip"], ["GoKit3.pdsclip", 114],
  ["Numeric Keypad Breakout.pdsclip"], ["Proteus Playkit Controller.pdsclip"], ["Proteus Playkit Peripherals.pdsclip"],
  ["Sparkfun Weather Station.pdsclip"], ["Virtual Front Panel (ESP8266).pdsclip"], ["Virtual Front Panel (Yun).pdsclip"],
];

export default function App() {
  return (
    <Screen>
      <Global />
      <Gradients />
      <MenuBar>
        {menu.map(([t, w, slot]) => (
          <MenuItem key={t} $slot={slot}><Wide w={w}>{t}</Wide></MenuItem>
        ))}
      </MenuBar>
      <Toolbar>
        <ToolGrip $w={14.3} $first $pad={5} />
        {tools.map((t, i) =>
          t === "|" ? <ToolSep key={i} /> : t[0] === "g" && t[1] === "2" ? (
            <ToolGrip key={i} $w={+t.slice(1)} />
          ) : (
            <Tool key={i}><Icon n={t} /></Tool>
          )
        )}
      </Toolbar>
      <TabStrip>
        <Tab $active $w={270} $pad={33} $gap={6}>
          <TabEdge width="270" height="26" viewBox="0 0 270 26">
            <path d="M0 21L32 .5h237V25H0z" fill="#d1ead8" />
            <path d="M0 21L32 .5h237V25" fill="none" stroke="#7f9490" />
          </TabEdge>
          <Icon n="schem" w={20} h={17} />
          <Wide w={161}>Schematic Capture</Wide>
          <span style={{ width: 2 }} />
          <CloseX />
        </Tab>
        <Tab $w={180} $pad={18} $gap={4}>
          <Icon n="chip" w={23} h={15} />
          <Wide w={84}>PCB Layout</Wide>
          <span style={{ width: 7 }} />
          <CloseX />
        </Tab>
      </TabStrip>
      <SubStrip />
      <Body>
        <Rail>
          <RailBody>
            <RailGrip />
            {rail.map((group, g) => (
              <React.Fragment key={g}>
                {group.map((n) => (
                  <RailTool key={n} $on={n === "arrow"}><Icon n={n} /></RailTool>
                ))}
                <RailLine />
              </React.Fragment>
            ))}
            <RailGrip $m="6px 2px 5px" />
            <RailTool><Icon n="rotr" /></RailTool>
            <RailTool><Icon n="rotl" /></RailTool>
            <Angle>0°</Angle>
            <RailLine $m="5px 3px 2px 6px" />
            <RailTool><Icon n="flipx" /></RailTool>
            <RailTool><Icon n="flipy" /></RailTool>
          </RailBody>
        </Rail>
        <Side>
          <Preview><Overview /></Preview>
          <Devices>
            <DevicesHead>
              <Pill><Wide w={13}>P</Wide></Pill>
              <Pill><Wide w={12}>L</Wide></Pill>
              <span style={{ width: 20 }} />
              <Wide w={70}>DEVICES</Wide>
            </DevicesHead>
            <DeviceList>
              {devices.map(([t, w], i) => (
                <Device key={t} $on={i === 0}><Wide w={w}>{t}</Wide></Device>
              ))}
            </DeviceList>
          </Devices>
        </Side>
        <Sheet>
          <Ruler>
            <RulerCell $h={104} $pb={91}><Wide w={11}>3</Wide></RulerCell>
            <RulerCell $h={190} $pb={3}><Wide w={11}>4</Wide></RulerCell>
            <RulerCell $h={190} $pt={3}><Wide w={11}>5</Wide></RulerCell>
            <RulerCell $h={190} $pb={2}><Wide w={11}>6</Wide></RulerCell>
          </Ruler>
          <Border />
          <Canvas>
            <SheetTitle><Wide w={385}>CIRCUITO PRINCIPAL</Wide></SheetTitle>
            <Frame />
          </Canvas>
        </Sheet>
      </Body>

      <Dialog>
        <DialogTitle>
          <ClipIcon />
          <Wide w={259}>Import Project Clip (Snippet) File</Wide>
        </DialogTitle>
        <LookRow>
          <Wide w={76}>Buscar en:</Wide>
          <Field $ml={12} $pl={7}>
            <SmallFolder />
            <Wide w={53}>Arduino</Wide>
          </Field>
        </LookRow>
        <Split>
          <Places>
            {places.map(([n, t, w, gap]) => (
              <Place key={n} $gap={gap}>
                {placeIcons[n]}
                <Wide w={w}>{t}</Wide>
              </Place>
            ))}
          </Places>
          <Files>
            <FilesHead>
              <Wide w={67}>Nombre</Wide>
              <Caret width="12" height="7" viewBox="0 0 12 7">
                <path d="M1 5.500L6 1.500l5 4" fill="none" stroke="#777" strokeWidth="1.300" />
              </Caret>
            </FilesHead>
            {files.map(([t, w], i) => (
              <File key={t} $on={i === 6}>
                <ClipIcon />
                <Wide w={w} k={1.315}>{t}</Wide>
              </File>
            ))}
          </Files>
        </Split>
        <Divider />
        <NameRow>
          <Wide w={63}>Nombre:</Wide>
          <Field $ml={39} $pl={5}>
            <Wide k={1.27}>Arduino Uno 328.pdsclip</Wide>
          </Field>
        </NameRow>
      </Dialog>
      <Halo />
      <Pointer width="19" height="24" viewBox="0 0 19 24">
        <path d="M1.500 1.500v18l5-4 3 7 4-1.500-3-6.500h7.500z" fill="#fffff4" stroke="#3a3a30" strokeWidth="1.200" />
      </Pointer>
    </Screen>
  );
}
